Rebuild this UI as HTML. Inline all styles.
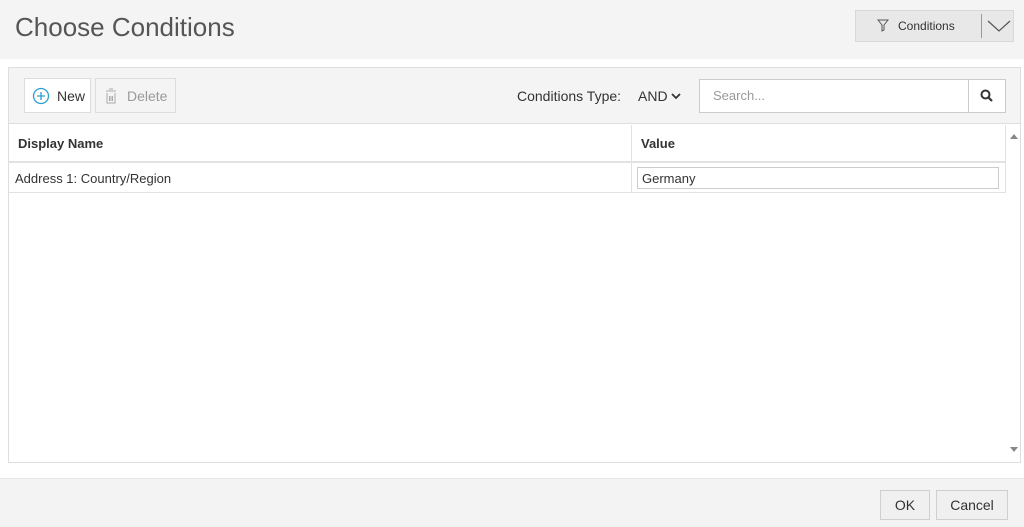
<!DOCTYPE html>
<html><head><meta charset="utf-8"><style>
*{box-sizing:border-box;margin:0;padding:0}
body{width:1024px;height:527px;background:#fff;font-family:"Liberation Sans",sans-serif;color:#333;position:relative;overflow:hidden}
.a{position:absolute}
.hdr{left:0;top:0;width:1024px;height:59px;background:#f4f4f4}
.title{left:15px;top:12px;font-size:26px;color:#555}
.cbtn{left:855px;top:10px;width:159px;height:32px;background:#e8e8e8;border:1px solid #d8d8d8}
.panel{left:8px;top:67px;width:1013px;height:396px;border:1px solid #dedede;background:#fff}
.tb{left:9px;top:68px;width:1011px;height:56px;background:#f4f4f4;border-bottom:1px solid #ddd}
.btn{background:#fff;border:1px solid #ddd;font-size:14px}
.foot{left:0;top:478px;width:1024px;height:49px;background:#f3f3f3;border-top:1px solid #e6e6e6}
.fb{background:#f0f0f0;border:1px solid #d0d0d0;font-size:14px;text-align:center;line-height:28px;color:#333}
</style></head><body>
<div class="a hdr"></div>
<div class="a title">Choose Conditions</div>
<div class="a cbtn"></div>
<svg class="a" style="left:877px;top:19px" width="12" height="13" viewBox="0 0 12 13"><path d="M1 1H11L7 6V11L5 12V6Z" fill="none" stroke="#555" stroke-width="1"/></svg>
<div class="a" style="left:898px;top:19px;font-size:12px;color:#333">Conditions</div>
<div class="a" style="left:981px;top:14px;width:1px;height:24px;background:#999"></div>
<svg class="a" style="left:986px;top:18px" width="26" height="16"><path d="M2 3L13 13L24 3" fill="none" stroke="#555" stroke-width="1.2"/></svg>

<div class="a panel"></div>
<div class="a tb"></div>
<div class="a btn" style="left:24px;top:78px;width:67px;height:35px"></div>
<svg class="a" style="left:32px;top:87px" width="18" height="18"><circle cx="9" cy="9" r="7.5" fill="none" stroke="#2a9fd0" stroke-width="1.3"/><path d="M9 5V13M5 9H13" stroke="#2a9fd0" stroke-width="1.3"/></svg>
<div class="a" style="left:57px;top:88px;font-size:14px;color:#333">New</div>
<div class="a btn" style="left:95px;top:78px;width:81px;height:35px;background:#f4f4f4"></div>
<svg class="a" style="left:103px;top:87px" width="16" height="18"><path d="M6 2H10M3 4H13M4 6V16H12V6M6.5 9V14M8 9V14M9.5 9V14" fill="none" stroke="#aaa" stroke-width="1"/></svg>
<div class="a" style="left:127px;top:88px;font-size:14px;color:#999">Delete</div>
<div class="a" style="left:517px;top:88px;font-size:14px;color:#333">Conditions Type:</div>
<div class="a" style="left:638px;top:88px;font-size:14px;color:#333">AND</div>
<svg class="a" style="left:671px;top:92px" width="10" height="8"><path d="M1 2L5 6L9 2" fill="none" stroke="#333" stroke-width="1.8"/></svg>
<div class="a" style="left:699px;top:79px;width:270px;height:34px;background:#fff;border:1px solid #ccc"></div>
<div class="a" style="left:713px;top:88px;font-size:13px;color:#999">Search...</div>
<div class="a" style="left:968px;top:79px;width:38px;height:34px;background:#fff;border:1px solid #ccc"></div>
<svg class="a" style="left:980px;top:89px" width="14" height="14"><circle cx="5.5" cy="5.5" r="4" fill="none" stroke="#333" stroke-width="2"/><path d="M8.5 8.5L12 12" stroke="#333" stroke-width="2.2"/></svg>

<div class="a" style="left:9px;top:124px;width:997px;height:39px;border-bottom:2px solid #e2e2e2"></div>
<div class="a" style="left:631px;top:125px;width:1px;height:68px;background:#e2e2e2"></div>
<div class="a" style="left:18px;top:136px;font-size:13px;font-weight:bold;color:#333">Display Name</div>
<div class="a" style="left:641px;top:136px;font-size:13px;font-weight:bold;color:#333">Value</div>
<div class="a" style="left:9px;top:192px;width:997px;height:1px;background:#e2e2e2"></div>
<div class="a" style="left:1005px;top:125px;width:1px;height:68px;background:#e2e2e2"></div>
<div class="a" style="left:15px;top:171px;font-size:13px;color:#333">Address 1: Country/Region</div>
<div class="a" style="left:637px;top:167px;width:362px;height:22px;border:1px solid #ccc;background:#fff"></div>
<div class="a" style="left:642px;top:171px;font-size:13px;color:#333">Germany</div>
<svg class="a" style="left:1009px;top:132px" width="10" height="8"><path d="M1 7L5 2L9 7Z" fill="#888"/></svg>
<svg class="a" style="left:1009px;top:446px" width="10" height="8"><path d="M1 1L5 6L9 1Z" fill="#888"/></svg>

<div class="a foot"></div>
<div class="a fb" style="left:880px;top:490px;width:50px;height:30px">OK</div>
<div class="a fb" style="left:936px;top:490px;width:72px;height:30px">Cancel</div>
</body></html>
